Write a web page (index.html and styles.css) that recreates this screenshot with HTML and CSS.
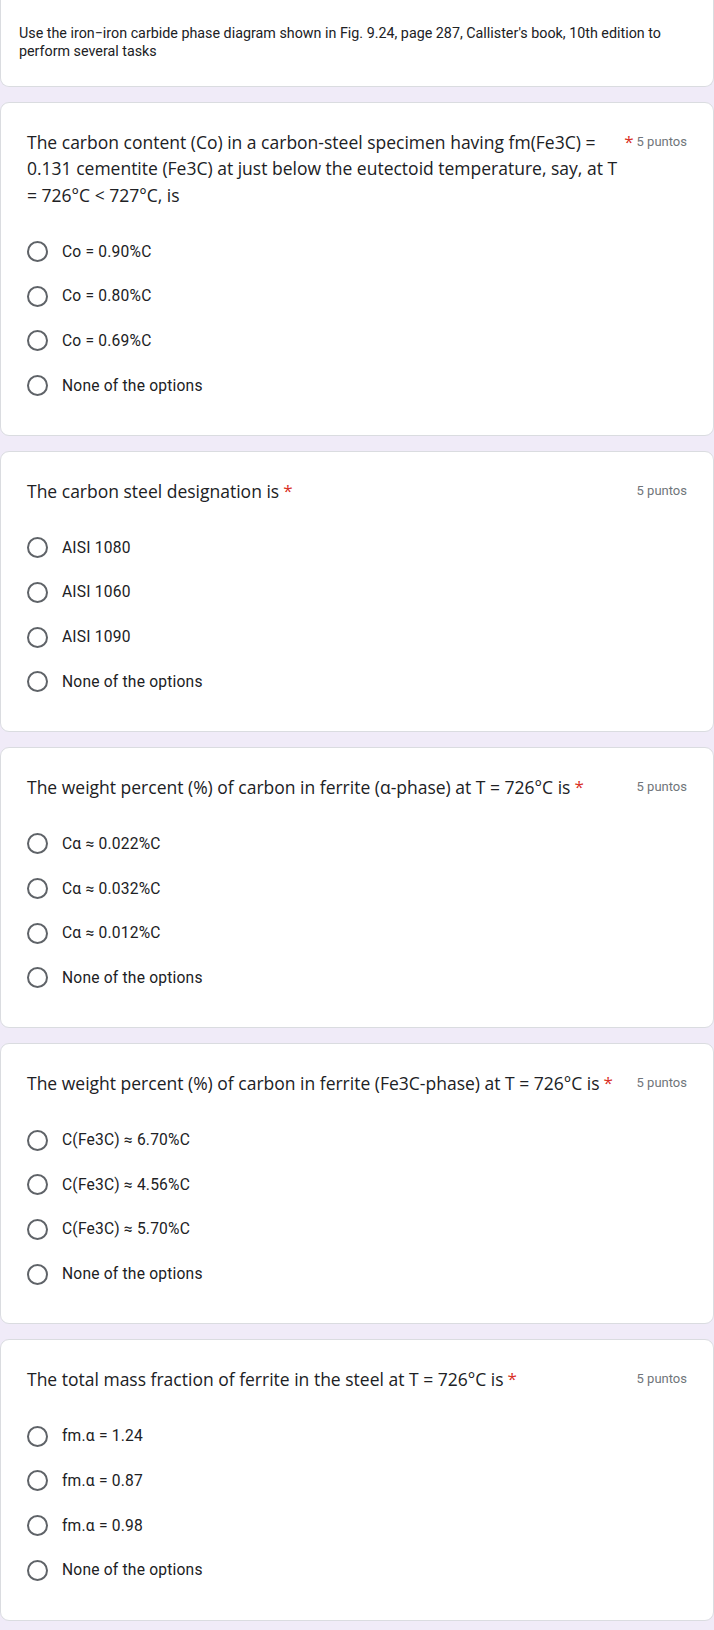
FILE: index.html
```html
<!DOCTYPE html>
<html lang="en">
<head>
  <meta charset="UTF-8" />
  <meta name="viewport" content="width=device-width, initial-scale=1.0" />
  <title>Fe-Fe3C quiz</title>
  <link rel="stylesheet" href="styles.css">
</head>
<body>
  <div class="form">
    <div class="card intro">
      <div class="intro-text">Use the iron−iron carbide phase diagram shown in Fig. 9.24, page 287, Callister's book, 10th edition to perform several tasks</div>
    </div>

    <div class="card question">
      <div class="q-head">
        <div class="q-title">
          <span class="q-text">The carbon content (Co) in a carbon-steel specimen having fm(Fe3C) = 0.131 cementite (Fe3C) at just below the eutectoid temperature, say, at T = 726°C &lt; 727°C, is</span>
          <span class="req">*</span>
        </div>
        <span class="points">5 puntos</span>
      </div>
      <div class="options">
        <label class="option"><span class="radio"></span>Co = 0.90%C</label>
        <label class="option"><span class="radio"></span>Co = 0.80%C</label>
        <label class="option"><span class="radio"></span>Co = 0.69%C</label>
        <label class="option"><span class="radio"></span>None of the options</label>
      </div>
    </div>

    <div class="card question">
      <div class="q-head">
        <div class="q-title">
          <span class="q-text">The carbon steel designation is</span>
          <span class="req">*</span>
        </div>
        <span class="points">5 puntos</span>
      </div>
      <div class="options">
        <label class="option"><span class="radio"></span>AISI 1080</label>
        <label class="option"><span class="radio"></span>AISI 1060</label>
        <label class="option"><span class="radio"></span>AISI 1090</label>
        <label class="option"><span class="radio"></span>None of the options</label>
      </div>
    </div>

    <div class="card question">
      <div class="q-head">
        <div class="q-title">
          <span class="q-text">The weight percent (%) of carbon in ferrite (α-phase) at T = 726°C is</span>
          <span class="req">*</span>
        </div>
        <span class="points">5 puntos</span>
      </div>
      <div class="options">
        <label class="option"><span class="radio"></span>Cα ≈ 0.022%C</label>
        <label class="option"><span class="radio"></span>Cα ≈ 0.032%C</label>
        <label class="option"><span class="radio"></span>Cα ≈ 0.012%C</label>
        <label class="option"><span class="radio"></span>None of the options</label>
      </div>
    </div>

    <div class="card question">
      <div class="q-head">
        <div class="q-title">
          <span class="q-text">The weight percent (%) of carbon in ferrite (Fe3C-phase) at T = 726°C is</span>
          <span class="req">*</span>
        </div>
        <span class="points">5 puntos</span>
      </div>
      <div class="options">
        <label class="option"><span class="radio"></span>C(Fe3C) ≈ 6.70%C</label>
        <label class="option"><span class="radio"></span>C(Fe3C) ≈ 4.56%C</label>
        <label class="option"><span class="radio"></span>C(Fe3C) ≈ 5.70%C</label>
        <label class="option"><span class="radio"></span>None of the options</label>
      </div>
    </div>

    <div class="card question">
      <div class="q-head">
        <div class="q-title">
          <span class="q-text">The total mass fraction of ferrite in the steel at T = 726°C is</span>
          <span class="req">*</span>
        </div>
        <span class="points">5 puntos</span>
      </div>
      <div class="options">
        <label class="option"><span class="radio"></span>fm.α = 1.24</label>
        <label class="option"><span class="radio"></span>fm.α = 0.87</label>
        <label class="option"><span class="radio"></span>fm.α = 0.98</label>
        <label class="option"><span class="radio"></span>None of the options</label>
      </div>
    </div>
  </div>
</body>
</html>
```

FILE: styles.css
```css
body {
  margin: 0;
  background: #f0ebf8;
  font-family: Roboto, "Liberation Sans", sans-serif;
  color: #202124;
}
.form {
  display: flex;
  flex-direction: column;
  gap: 15px;
  padding-bottom: 20px;
}
.card {
  background: #fff;
  border: 1px solid #dadce0;
  border-radius: 9px;
}
.intro {
  border-top: none;
  border-radius: 0 0 9px 9px;
  padding: 24px 18px 26px;
}
.intro-text {
  font-size: 14.3px;
  line-height: 18px;
}
.question {
  padding: 26px 26px 27px;
}
.q-head {
  display: flex;
  align-items: flex-start;
}
.q-title {
  display: flex;
  align-items: flex-start;
}
.q-text {
  font-family: "Open Sans", sans-serif;
  font-size: 17.5px;
  line-height: 26.4px;
}
.req {
  color: #d93025;
  font-family: "Open Sans", sans-serif;
  font-size: 17px;
  line-height: 26.4px;
  padding-left: 4px;
}
.points {
  margin-left: auto;
  padding-left: 3px;
  flex-shrink: 0;
  font-size: 13px;
  line-height: 26.4px;
  color: #70757a;
}
.options {
  margin-top: 21px;
}
.option {
  display: flex;
  align-items: center;
  height: 44.7px;
  font-size: 15.6px;
  letter-spacing: 0.2px;
}
.radio {
  width: 17px;
  height: 17px;
  border: 2.2px solid #5f6368;
  border-radius: 50%;
  margin-right: 14px;
  flex-shrink: 0;
}
```
